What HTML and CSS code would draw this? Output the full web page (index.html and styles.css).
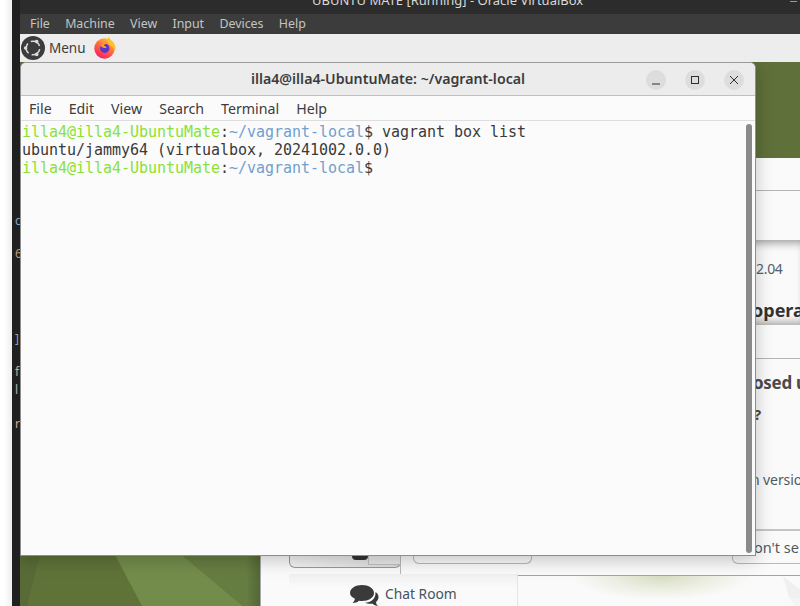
FILE: index.html
```html
<!DOCTYPE html>
<html lang="en">
<head>
<meta charset="utf-8">
<title>Terminal</title>
<link rel="stylesheet" href="styles.css">
</head>
<body>
<div class="screen">
  <div class="margin"></div>
  <div class="host">
    <div class="sliver s1">c</div>
    <div class="sliver s2">6</div>
    <div class="sliver s3">]</div>
    <div class="sliver s4">f</div>
    <div class="sliver s5">l</div>
    <div class="sliver s6">r</div>
  </div>
  <div class="vm">
    <header class="vb-title"><span class="vb-title-text">UBUNTU MATE [Running] - Oracle VirtualBox</span><span class="vb-min"></span></header>
    <nav class="vb-menu"><span>File</span><span>Machine</span><span>View</span><span>Input</span><span>Devices</span><span>Help</span></nav>
    <div class="panel">
      <svg class="ubuntu" width="24" height="24" viewBox="0 0 24 24">
        <circle cx="12" cy="12" r="12" fill="#3c3c3c"/>
        <circle cx="12" cy="12" r="6.800" fill="none" stroke="#dcdcdc" stroke-width="1.500" stroke-dasharray="10.800 3.400" transform="rotate(10 12 12)"/>
        <circle cx="4.600" cy="12" r="1.800" fill="#dcdcdc"/>
        <circle cx="15.700" cy="5.600" r="1.800" fill="#dcdcdc"/>
        <circle cx="15.700" cy="18.400" r="1.800" fill="#dcdcdc"/>
      </svg>
      <span class="panel-menu">Menu</span>
      <svg class="firefox" width="22" height="23" viewBox="0 0 22 23">
        <defs>
          <linearGradient id="ff" x1="0.8" y1="0" x2="0.2" y2="1">
            <stop offset="0" stop-color="#ffc93c"/>
            <stop offset="0.45" stop-color="#ff6f3a"/>
            <stop offset="1" stop-color="#f5156c"/>
          </linearGradient>
        </defs>
        <circle cx="10.500" cy="12.500" r="10.200" fill="url(#ff)"/>
        <path d="M14.500 0c.2 3 3.600 4.200 5.400 7 1.900 3 2 5.800 1.400 8-1.500-2.500-3.300-5.500-6.800-7-.8-2.800-.8-5.500 0-8z" fill="#ffc02e"/>
        <circle cx="10.800" cy="12.300" r="4.700" fill="#5b35c4"/>
        <path d="M6.500 9.800c2-3.300 5.800-4.200 8.800-2.200-3-.3-4.800.5-5.400 2.100 1.400.4 2.400 1 2.800 1.700-1.500 1-3.500.8-5.100-.6z" fill="#ff9a2e"/>
      </svg>
    </div>
    <div class="desktop">
      <div class="wall wall-top"></div>
      <svg class="wall wall-bottom" viewBox="0 0 240 51" width="240" height="51" preserveAspectRatio="none">
        <defs>
          <linearGradient id="edge" x1="0" y1="0" x2="1" y2="0">
            <stop offset="0" stop-color="#000" stop-opacity="0"/>
            <stop offset="1" stop-color="#000" stop-opacity="0.18"/>
          </linearGradient>
        </defs>
        <rect width="240" height="51" fill="#586b37"/>
        <polygon points="20,0 95,0 122,51 7,51" fill="#5f7339"/>
        <polygon points="95,0 162,0 223,51 122,51" fill="#738c4b"/>
        <polygon points="162,0 240,0 240,51 223,51" fill="#667d42"/>
        <rect x="226" width="14" height="51" fill="url(#edge)"/>
      </svg>
      <section class="app">
        <div class="app-top"></div>
        <div class="app-band"></div>
        <div class="app-card">
          <p class="version">2.04</p>
          <p class="heading">opera</p>
        </div>
        <div class="app-gap"></div>
        <div class="app-body">
          <p class="question">osed u</p>
          <p class="mark">?</p>
          <p class="body-text">n version</p>
        </div>
        <div class="app-foot"></div>
        <div class="tile-box"><span class="tile-dark"></span><span class="tile-light"></span></div>
        <div class="dialog">
          <span class="dlg-btn dlg-btn-a"></span>
          <span class="dlg-btn dlg-btn-b"></span>
          <p class="foot-text">on't se</p>
        </div>
        <div class="chat">
          <svg width="30" height="24" viewBox="0 0 30 24">
            <path d="M13 1c6.600 0 12 3.300 12 8s-5.400 8-12 8c-1 0-2-.1-3-.3-1.500 1.300-4 2.300-6.500 2.300 1.400-1 2.200-2.600 2.400-4.200C2.800 13.300 1 11.300 1 9c0-4.700 5.400-8 12-8z" fill="#3a3a3a"/>
            <path d="M26.500 8c2 1.400 3 3.200 3 5.200 0 1.800-.9 3.500-2.500 4.700.2 1.800.9 3.200 2 4.100-2.200-.2-4-1-5.300-2.300-2.700.4-5.600 0-7.700-1 5.500-.1 11-3.500 10.500-10.700z" fill="#3a3a3a"/>
          </svg>
          <span>Chat Room</span>
        </div>
        <div class="glow">
          <svg class="facet" width="40" height="30" viewBox="0 0 40 30">
            <polygon points="22,0 40,14 40,24 28,21" fill="#f0f0f0"/>
            <polygon points="28,21 40,24 40,30 34,30" fill="#f4f4f4"/>
          </svg>
        </div>
      </section>
      <section class="terminal">
        <header class="term-title">
          <h1>illa4@illa4-UbuntuMate: ~/vagrant-local</h1>
          <div class="controls">
            <button class="ctl"><svg width="12" height="12" viewBox="0 0 12 12"><path d="M2 10h8" stroke="#2e2e2e" stroke-width="1.200"/></svg></button>
            <button class="ctl"><svg width="12" height="12" viewBox="0 0 12 12"><rect x="2.500" y="2.500" width="7" height="7" fill="none" stroke="#2e2e2e" stroke-width="1"/></svg></button>
            <button class="ctl"><svg width="12" height="12" viewBox="0 0 12 12"><path d="M2 2l8 8M10 2l-8 8" stroke="#2e2e2e" stroke-width="1"/></svg></button>
          </div>
        </header>
        <nav class="term-menu"><span>File</span><span>Edit</span><span>View</span><span>Search</span><span>Terminal</span><span>Help</span></nav>
        <div class="term-body">
<pre class="output"><span class="user">illa4@illa4-UbuntuMate</span>:<span class="path">~/vagrant-local</span>$ vagrant box list
ubuntu/jammy64 (virtualbox, 20241002.0.0)
<span class="user">illa4@illa4-UbuntuMate</span>:<span class="path">~/vagrant-local</span>$</pre>
          <div class="scrollbar"></div>
        </div>
      </section>
    </div>
  </div>
</div>
</body>
</html>
```
FILE: styles.css
```css
* { box-sizing: border-box; }
html, body { margin: 0; padding: 0; }
body { width: 800px; height: 606px; overflow: hidden; background: #fff; font-family: "Noto Sans", sans-serif; }
p, h1 { margin: 0; font-weight: normal; }

.screen { display: flex; width: 800px; height: 606px; overflow: hidden; }
.margin { width: 12px; background: linear-gradient(90deg, #fff 0, #fff 4px, #eeeeee 100%); }
.host { position: relative; width: 8px; background: #202020; }
.sliver { position: absolute; left: 3px; font-size: 12px; line-height: 14px; color: #8aa2c4; width: 5px; overflow: hidden; }
.s1 { top: 214px; }
.s2 { top: 247px; color: #b8987a; }
.s3 { top: 332px; }
.s4 { top: 365px; color: #d0ac88; }
.s5 { top: 383px; color: #aab3bd; }
.s6 { top: 417px; color: #d0ac88; }

.vm { width: 780px; display: flex; flex-direction: column; }
.vb-title { position: relative; height: 14px; background: #2c2c2c; overflow: hidden; }
.vb-title-text { position: absolute; left: 292px; top: -9px; font-size: 13px; line-height: 18px; color: #d8d8d8; white-space: nowrap; }
.vb-min { position: absolute; right: 3px; top: 1px; width: 7px; height: 1px; background: #999; }
.vb-menu { height: 20px; background: #3c3c3c; display: flex; gap: 15.300px; padding-left: 10px; font-size: 12.400px; line-height: 19px; color: #c4c4c4; }
.panel { height: 28px; background: #ededed; display: flex; align-items: center; }
.ubuntu { margin-left: 1px; }
.panel-menu { margin-left: 4px; margin-right: 8px; font-size: 13.500px; color: #3c3c3c; }
.firefox { margin-top: -2px; }

.desktop { position: relative; flex: 1; background: #5b6b38; overflow: hidden; }
.wall { position: absolute; }
.wall-top { left: 0; top: 0; width: 780px; height: 100px; background: linear-gradient(90deg, #5b6b38, #5f7039); }
.wall-bottom { left: 0; top: 493px; }

.app { position: absolute; left: 240px; top: 96px; width: 540px; height: 448px; background: #fafafa; border-left: 1px solid #a8a8a8; display: flex; flex-direction: column; color: #3d3d3d; }
.app-top { height: 33px; border-bottom: 1px solid #b4b4b4; background: #fafafa; }
.app-band { height: 49px; background: #fafafa; }
.app-card { position: relative; height: 85px; background: #fafafa; box-shadow: inset 0 9px 8px -6px #9c9c9c, inset 0 -9px 8px -6px #a4a4a4; }
.version { position: absolute; left: 495px; top: 19px; font-size: 14px; line-height: 20px; letter-spacing: -0.3px; color: #54606c; }
.heading { position: absolute; left: 491px; top: 59px; font-size: 18px; line-height: 22px; font-weight: 700; color: #333; white-space: nowrap; }
.app-gap { height: 34px; border-bottom: 1px solid #b4b4b4; background: #fafafa; }
.app-body { position: relative; height: 171px; background: #fafafa; border-bottom: 1px solid #c4c4c4; }
.question { position: absolute; left: 492px; top: 13px; font-size: 17px; line-height: 22px; letter-spacing: -0.3px; font-weight: 700; color: #4a4a4a; white-space: nowrap; }
.mark { position: absolute; left: 493px; top: 45px; font-size: 15px; line-height: 20px; font-weight: 700; color: #4a4a4a; }
.body-text { position: absolute; left: 490px; top: 111px; font-size: 14px; line-height: 20px; letter-spacing: -0.1px; color: #505a64; white-space: nowrap; }
.app-foot { height: 46px; }

.tile-box { position: absolute; left: 28px; top: 370px; width: 112px; height: 40px; border: 1px solid #999; border-top: 0; border-radius: 0 0 6px 6px; background: linear-gradient(90deg, #f4f4f4, #dcdcdc); }
.tile-dark { position: absolute; left: 62px; bottom: 7px; width: 16px; height: 6px; background: #333; border-radius: 0 0 4px 4px; }
.tile-light { position: absolute; left: 78px; bottom: 2px; width: 34px; height: 14px; background: #e8e8e8; border: 1px solid #c0c0c0; border-width: 0 0 1px 1px; }

.dialog { position: absolute; left: 139px; top: 372px; width: 401px; height: 46px; background: #fafafa; border-top: 1px solid #c4c4c4; border-left: 1px solid #b8b8b8; border-bottom: 1px solid #a4a4a4; }
.dlg-btn { position: absolute; top: 0; height: 33px; border: 1px solid #b8b8b8; border-top: 0; border-radius: 0 0 6px 6px; }
.dlg-btn-a { left: 12px; width: 119px; }
.dlg-btn-b { left: 331px; width: 80px; }
.foot-text { position: absolute; left: 353px; top: 6px; font-size: 14.500px; line-height: 20px; color: #505a64; white-space: nowrap; }

.chat { position: absolute; left: 28px; top: 416px; width: 229px; height: 32px; display: flex; align-items: flex-start; padding: 10px 0 0 60px; gap: 6px; background: linear-gradient(#f0f0f0, #fafafa 14px); border-right: 1px solid #e4e4e4; font-size: 13.800px; line-height: 20px; color: #46525e; }
.chat svg { flex: none; }
.glow { position: absolute; left: 257px; top: 418px; width: 283px; height: 30px; background: radial-gradient(ellipse 90px 24px at 143px 0, #d5dcc0 0, #eceee2 55%, #fafafa 100%); }
.facet { position: absolute; right: 0; top: 0; }

.terminal { position: absolute; left: 0; top: 0; width: 736px; height: 494px; display: flex; flex-direction: column; background: #fbfbfb; border: 1px solid #8e8e8e; border-top-color: #9a9a9a; border-radius: 6px 6px 0 0; overflow: hidden; box-shadow: 0 4px 18px rgba(0,0,0,.22); }
.term-title { position: relative; height: 33px; flex: none; background: #ececec; border-bottom: 1px solid #c0c0c0; display: flex; align-items: center; justify-content: center; }
.term-title h1 { font-size: 14.200px; font-weight: 600; color: #3c3c3c; margin-bottom: 1px; }
.controls { position: absolute; right: 11px; top: 7px; display: flex; gap: 19px; }
.ctl { width: 20px; height: 20px; padding: 0; border: 0; border-radius: 50%; background: #dddddd; display: flex; align-items: center; justify-content: center; }
.term-menu { height: 25px; flex: none; display: flex; gap: 17px; padding: 1px 0 0 8px; background: #fbfbfb; border-bottom: 1px solid #dedede; font-size: 14.200px; line-height: 24px; color: #3c3c3c; }
.term-body { position: relative; flex: 1; }
.output { margin: 0; padding: 2px 0 0 1px; font-family: "DejaVu Sans Mono", monospace; font-size: 15px; line-height: 18px; letter-spacing: -0.03px; color: #3a3a3a; }
.user { color: #8ae234; }
.path { color: #729fcf; }
.scrollbar { position: absolute; right: 3px; top: 3px; bottom: 2px; width: 6px; background: #8a8a8a; border-radius: 3px; }
```
